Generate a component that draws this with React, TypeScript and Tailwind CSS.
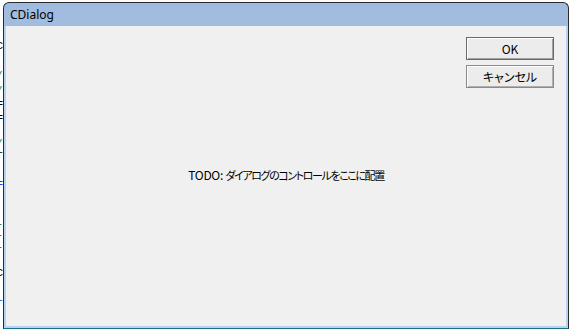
import React from "react";

const jp = "font-['MS_UI_Gothic','Noto_Sans_CJK_JP',sans-serif]";

// clipped glyphs of the editor behind the dialog
const Frag = ({ h, cls, ch }: { h: string; cls: string; ch: string }) => (
  <div className={`flex w-[3px] justify-end overflow-hidden ${h}`}>
    <span className={`shrink-0 font-['Liberation_Mono',monospace] text-[11px] leading-[9px] ${cls}`}>
      {ch}
    </span>
  </div>
);

const App = () => {
  return (
    <div className="flex h-[331px] w-[570px] overflow-hidden bg-white">
      {/* Editor behind */}
      <div className="flex w-[3px] shrink-0 flex-col pt-[42px]">
        <Frag h="h-[29px]" cls="text-black" ch="C" />
        <Frag h="h-[15px]" cls="text-green-700" ch="/" />
        <Frag h="h-[14px]" cls="text-green-700" ch="/" />
        <Frag h="h-[14px]" cls="text-black" ch="=" />
        <Frag h="h-[25px]" cls="text-black" ch="=" />
        <Frag h="h-[12px]" cls="text-green-700" ch="/" />
        <Frag h="h-[29px]" cls="text-black" ch="f" />
        <Frag h="h-[40px]" cls="text-blue-700" ch="=" />
        <Frag h="h-[11px]" cls="text-green-700" ch="-" />
        <Frag h="h-[12px]" cls="text-green-700" ch="-" />
        <Frag h="h-[26px]" cls="text-green-700" ch="-" />
        <Frag h="h-[30px]" cls="text-black" ch="C" />
        <Frag h="h-[12px]" cls="text-blue-700" ch="f" />
      </div>

      {/* Dialog window */}
      <div className="mt-[2px] flex h-[327px] w-[566px] shrink-0 flex-col rounded-t-[6px] border border-[#2a2a2a] border-b-[#1b6f8a] bg-gradient-to-b from-[#9fbbdf] to-[#bcd3ec]">
        <div className="flex h-[23px] items-center pl-[6px] font-['Noto_Sans',sans-serif] text-[12px] text-black">
          CDialog
        </div>
        <div className="flex-1 bg-[#b9d3ee] px-[2px] pb-[2px]">
          <div className="grid h-[300px] w-[560px] bg-[#f0f0f0]">
            <div
              className={`col-start-1 row-start-1 flex items-baseline place-self-center pb-[2px] text-black ${jp}`}
            >
              <span className="text-[12px] tracking-[-0.3px]">TODO:&nbsp;</span>
              <span className="text-[11px] tracking-[-1.4px] [font-feature-settings:'palt']">
                ダイアログのコントロールをここに配置
              </span>
            </div>
            <div className="col-start-1 row-start-1 flex flex-col gap-[5px] self-start justify-self-end pr-[12px] pt-[11px]">
              <button
                className={`flex h-[23px] w-[88px] items-center justify-center border border-[#6a6a6a] bg-[#ececec] text-[12px] text-black shadow-[inset_1px_1px_0_#ffffff,inset_-1px_-1px_0_#a0a0a0] ${jp}`}
              >
                OK
              </button>
              <button
                className={`flex h-[23px] w-[88px] items-center justify-center border border-[#8a8a8a] bg-[#ececec] text-[12px] text-black shadow-[inset_1px_1px_0_#ffffff,inset_-1px_-1px_0_#b0b0b0] [font-feature-settings:'palt'] ${jp}`}
              >
                キャンセル
              </button>
            </div>
          </div>
        </div>
      </div>
    </div>
  );
};

export default App;
